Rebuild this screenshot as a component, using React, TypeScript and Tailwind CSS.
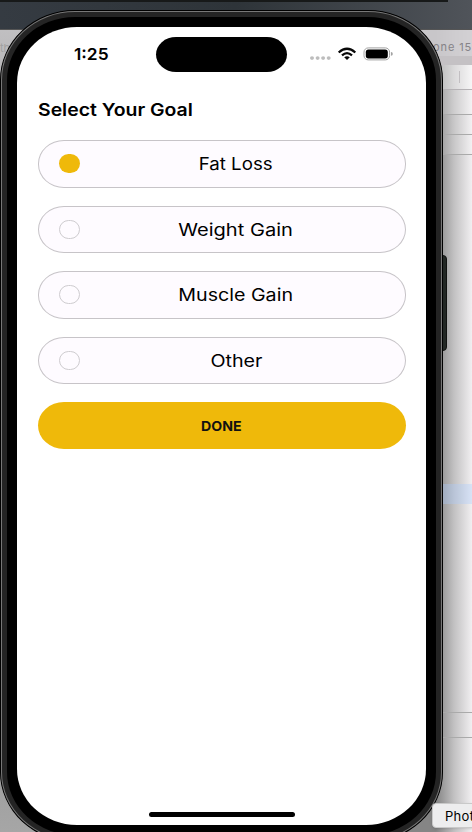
const options = [
  { label: 'Fat Loss', selected: true, fit: 'scale-x-[1.10]' },
  { label: 'Weight Gain', selected: false, fit: 'scale-x-[1.18]' },
  { label: 'Muscle Gain', selected: false, fit: 'scale-x-[1.155]' },
  { label: 'Other', selected: false, fit: 'scale-x-[1.16]' },
];

function Backdrop() {
  return (
    <div className="absolute inset-0 flex flex-col bg-[#b5b5b5]">
      <div className="h-[30px] shrink-0 border-b border-[#555] bg-linear-to-r from-[#353b42] via-[#2e3439] to-[#50545a]">
        <div className="h-0.5 w-[448px] bg-[#171919]" />
      </div>
      <div className="flex min-h-0 flex-1 justify-between">
        <div className="w-[60px] bg-linear-to-b from-[#c0bfc1] via-[#777] to-[#a6a6a6] pt-2.5 text-[11px] text-[#a0a0a0]">th</div>
        <div className="flex w-[72px] flex-col bg-linear-to-r from-[#858585] from-50% via-[#c2c1c2] via-75% to-[#f1eff1]">
          <div className="h-[26px] bg-[#cfcdd0]/90 pt-2.5 pl-[33px] text-[11px] leading-[14px] tracking-[0.9px] whitespace-nowrap text-[#858387]">one 15</div>
          <div className="h-[9px] bg-[#c4c1c4]" />
          <div className="flex h-[25px] items-center justify-end border-b border-[#b5b2b5] bg-white/40 pr-3"><div className="h-3 w-px bg-[#c2bfc2]" /></div>
          <div className="h-[25px] border-b border-[#aaa] bg-white/20" />
          <div className="h-5 border-b border-[#aaa] bg-white/10" />
          <div className="h-5 border-b border-[#aaa] bg-white/10" />
          <div className="mt-[329px] h-5 bg-[#a9caff]/35" />
          <div className="mt-[208px] h-[26px] border-y border-[#aaa]" />
        </div>
      </div>
    </div>
  );
}

function StatusBar() {
  return (
    <div className="flex h-[57px] items-start pt-[10px]">
      <div className="ml-[57px] flex h-[35px] w-[82px] items-center text-[16.5px] font-semibold">
        <span className="origin-left scale-x-[1.05]">1:25</span>
      </div>
      <div className="h-[35px] w-[131px] rounded-[20px/17.5px] bg-black" />
      <svg className="mt-[8px] ml-[21px]" width="86" height="20" viewBox="0 0 86 20">
        <g fill="#bdbdbd"><ellipse cx="4" cy="13.1" rx="2" ry="1.8" /><ellipse cx="9.6" cy="13.1" rx="2" ry="1.8" /><ellipse cx="15.1" cy="13.1" rx="2" ry="1.8" /><ellipse cx="20.7" cy="13.1" rx="2" ry="1.8" /></g>
        <g fill="none" stroke="#080808" strokeWidth="2.3">
          <path d="M30.7 7.5Q39 .1 47.3 7.5" />
          <path d="M34 10.3Q39 5.9 44 10.3" />
        </g>
        <path d="M36.2 12.2Q39 10.2 41.8 12.2L39 15Z" fill="#080808" />
        <rect x="56" y="2.9" width="25.6" height="12" rx="4.2" fill="none" stroke="#a2a2a2" />
        <rect x="57.8" y="4.6" width="22" height="8.8" rx="2.6" fill="#000" />
        <path d="M83 7Q84.8 7.3 84.8 8.9T83 10.8Z" fill="#a2a2a2" />
      </svg>
    </div>
  );
}

export default function App() {
  return (
    <div className="relative h-[832px] w-[472px] overflow-hidden font-[Inter,'Liberation_Sans',sans-serif] text-black">
      <Backdrop />
      <div className="absolute top-[255px] left-[440px] h-[96px] w-[7px] rounded-r-sm border border-[#101210] bg-[#222724]" />
      <div className="absolute top-[10px] left-0 h-[832px] w-[443px] rounded-[75px/70px] border border-black bg-black">
        <div className="h-full rounded-[74px/69px] border border-[#777] bg-[#242424] p-[5px]">
          <div className="h-full rounded-[68px/63px] bg-black px-[10px] py-[10px]">
            <main className="flex h-[798px] w-[409px] flex-col overflow-hidden rounded-[60px/56px] bg-white">
              <StatusBar />
              <section className="flex flex-col px-[20.5px] pt-[14px]">
                <h1 className="ml-[0.5px] flex h-6 items-center text-[17.5px] font-semibold whitespace-nowrap"><span className="origin-left scale-x-[1.11]">Select Your Goal</span></h1>
                <div className="mt-[18px] flex flex-col gap-[18.6px]">
                  {options.map(({ label, selected, fit }) => (
                    <button key={label} className="-mb-[0.5px] flex h-[47.5px] w-[368px] items-center rounded-[26px/23.5px] border border-[#c7c4c8] bg-[#fefbff] pl-[20px]">
                      <span className={selected ? 'h-[19px] w-[21px] rounded-full bg-[#efb90a]' : 'h-[19px] w-[21px] rounded-full border border-[#cecccf]'} />
                      <span className="flex flex-1 justify-center pt-[2px] pr-[12px] text-[17px] whitespace-nowrap"><span className={fit}>{label}</span></span>
                    </button>
                  ))}
                </div>
                <button className="mt-[18.5px] flex h-[47px] w-[368px] items-center justify-center rounded-[26px/23.5px] bg-[#efb90a] text-[13.5px] font-bold text-[#111]"><span className="scale-x-[1.05]">DONE</span></button>
              </section>
              <div className="mt-auto mb-[8px] ml-[132px] h-[5px] w-[146px] rounded-full bg-black" />
            </main>
          </div>
        </div>
      </div>
      <div className="absolute top-[803px] left-[432px] h-[25px] w-[60px] rounded-[4px] border border-[#c9c9c9] bg-[#ededee] pl-3 text-[13px] leading-[24px] tracking-[0.3px] shadow">Phot</div>
    </div>
  );
}
